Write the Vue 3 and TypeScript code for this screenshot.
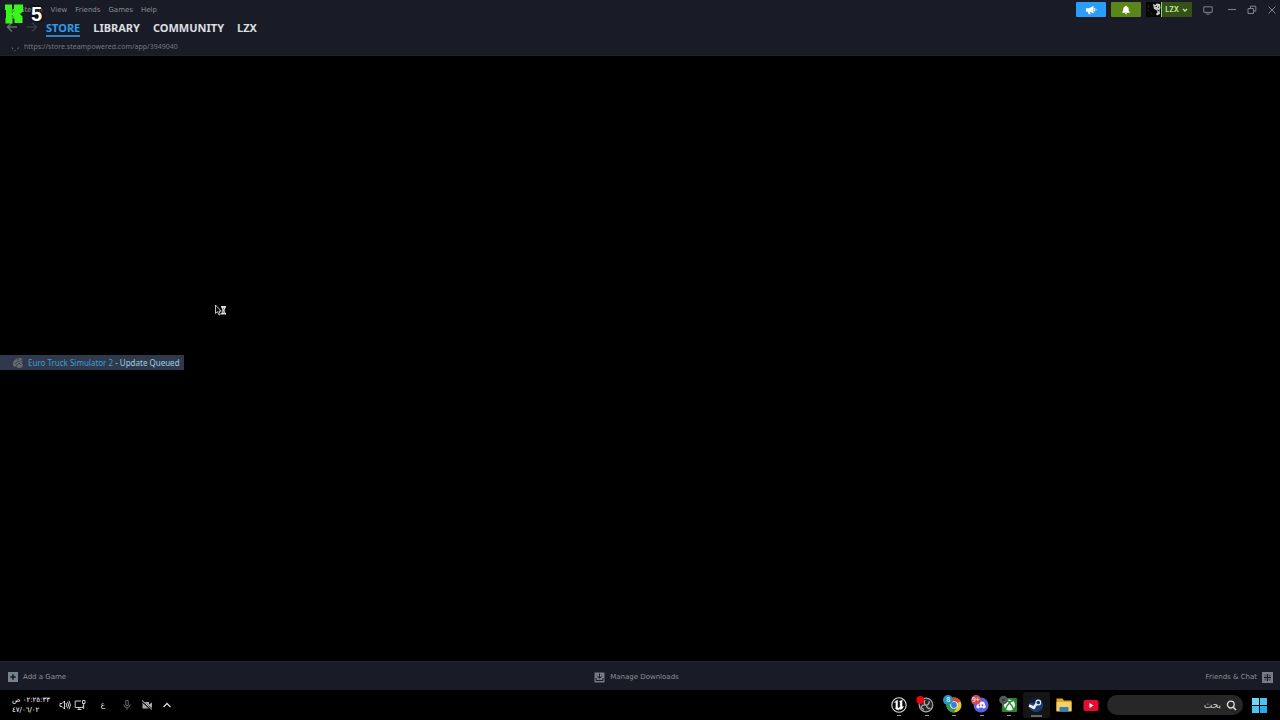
<script setup lang="ts">
interface NavTab {
  label: string
  active: boolean
}

const menus: string[] = ['Steam', 'View', 'Friends', 'Games', 'Help']
const tabs: NavTab[] = [
  { label: 'STORE', active: true },
  { label: 'LIBRARY', active: false },
  { label: 'COMMUNITY', active: false },
  { label: 'LZX', active: false },
]
</script>

<template>
  <div class="desktop">
    <header class="top">
      <div class="left">
        <nav class="menus" aria-label="Menu">
          <button v-for="m in menus" :key="m" type="button">{{ m }}</button>
        </nav>
        <nav class="tabs" aria-label="Main">
          <button class="arrow" type="button" aria-label="Back">
            <svg width="12" height="12" viewBox="0 0 12 12"><path d="M6 1.5 1.5 6 6 10.5M1.8 6H11" /></svg>
          </button>
          <button class="arrow dim" type="button" aria-label="Forward">
            <svg width="12" height="12" viewBox="0 0 12 12"><path d="M6 1.5 10.5 6 6 10.5M1 6h9.2" /></svg>
          </button>
          <a v-for="t in tabs" :key="t.label" href="#" :class="{ active: t.active }">{{ t.label }}</a>
        </nav>
        <div class="address">
          <svg width="10" height="10" viewBox="0 0 10 10">
            <path d="M2 5.500 3 7M4.500 8.500h1M7.500 7l1-1.500" fill="none" stroke="#6b7078" />
          </svg>
          <span>https://store.steampowered.com/app/3949040</span>
        </div>
      </div>
      <div class="controls">
        <button class="news" type="button" aria-label="News">
          <svg width="12" height="10" viewBox="0 0 12 10">
            <path d="M1 3.200h3L8.500 1v7.500L5 6.800l.6 2.400H3.500L3 6.700H1z" fill="#fff" />
            <path d="M9.700 3v3.500M10.800 4.700h.8" stroke="#fff" fill="none" />
          </svg>
        </button>
        <button class="alerts" type="button" aria-label="Notifications">
          <svg width="10" height="10" viewBox="0 0 10 10">
            <path d="M5 .8c.6 0 .9.4.9.8 1.400.4 1.800 1.500 1.800 2.700 0 1.400.3 2 1.100 2.700v.7H1.200V7c.8-.7 1.100-1.300 1.100-2.700 0-1.200.4-2.300 1.800-2.700 0-.4.3-.8.9-.8zM3.900 8.200h2.200c0 1.300-2.200 1.300-2.200 0z" fill="#fff" />
          </svg>
        </button>
        <button class="account" type="button">
          <svg class="avatar" width="16" height="15" viewBox="0 0 16 15">
            <path d="M0 0h15v15H0z" fill="#050706" />
            <path d="M7 2l2.500 1 1-1.500 3.500.5.5 4-1 2 .5 4-3 1.500-1-1.500L11.500 10l-1-2-2.500-1z" fill="#c9cecb" />
            <path d="M9.500 4.500h1.500M12 5l1 .5M11.500 8l1.500 1" stroke="#111" />
            <path d="M1 8l2 1M2 3l1 3M4 10l2 2" stroke="#252a29" />
            <path d="M15 0h1v15h-1z" fill="#a3cf5c" />
          </svg>
          <span>LZX</span>
          <svg width="6" height="6" viewBox="0 0 6 6"><path d="M1 2l2 2 2-2" fill="none" stroke="#bde58b" stroke-width="1.300" /></svg>
        </button>
        <button class="win bigpic" type="button" aria-label="Big Picture">
          <svg width="10" height="10" viewBox="0 0 10 10"><path d="M.8 1.800h8.400v5.500H.8zM3 9h4" /></svg>
        </button>
        <button class="win" type="button" aria-label="Minimize">
          <svg width="10" height="10" viewBox="0 0 10 10"><path d="M1 4.500h8" /></svg>
        </button>
        <button class="win" type="button" aria-label="Restore">
          <svg width="10" height="10" viewBox="0 0 10 10"><path d="M1 3.500h5.500V8.500H1zM3.500 3.200V1.200h5.300v5H6.800" /></svg>
        </button>
        <button class="win" type="button" aria-label="Close">
          <svg width="10" height="10" viewBox="0 0 10 10"><path d="M1.500 1.500l7 7M8.500 1.500l-7 7" /></svg>
        </button>
      </div>
      <div class="overlay">
        <svg width="18" height="20" viewBox="0 0 18 20">
          <path d="M0 .5h7v5l2-.5V.5h9v7l-3 2.500 2.500 2.500V19H9.500v-4L7.500 14v5.500H.5V14H1V6H0z" fill="#3cf51f" />
          <path d="M7.200 6v3l2-2.500M7.200 13.500v-2.300l2 2.300" fill="none" stroke="#1a7b18" stroke-width=".6" />
        </svg>
        <span>5</span>
      </div>
    </header>

    <main class="page">
      <div class="status">
        <svg width="12" height="12" viewBox="0 0 12 12">
          <path d="M1 8C.5 4 4 1 8 1l3 1-3 1.500 3 .5-2 2 2 1-1 3.500-4 .5-2-2-2 1z" fill="#68696d" />
          <path d="M3 7l3-3 2 1M4 9l3-3 2 2M5 3l2-1" fill="none" stroke="#30343c" stroke-width=".7" />
        </svg>
        <span><span class="game">Euro Truck Simulator 2</span> - Update Queued</span>
      </div>
      <svg class="pointer" width="13" height="12" viewBox="0 0 13 12">
        <path d="M1.500 1v8.500l2-1.800L5 11l1.300-.6L5 7.200h2.300z" fill="#111" stroke="#eee" stroke-width=".8" />
        <path d="M7 2h5v1.500H7zM7 9h5v1.500H7zM7.500 3.500h4l-1 2.700 1 2.800h-4l1-2.800z" fill="#ddd" />
        <path d="M9 4.700h1M8.500 8h2" fill="none" stroke="#222" stroke-width=".8" />
      </svg>
    </main>

    <footer class="bottom">
      <button type="button">
        <svg width="10" height="10" viewBox="0 0 10 10"><path d="M0 0h10v10H0z" fill="#77808d" /><path d="M5 2.200v5.600M2.200 5h5.600" stroke="#1a1d27" stroke-width="1.600" /></svg>
        <span>Add a Game</span>
      </button>
      <button type="button">
        <svg width="11" height="11" viewBox="0 0 11 11"><path d="M.5.5h10v10H.5z" fill="#777b85" /><path d="M5.500 1.500v4.500M3.200 4l2.300 2.300L7.800 4M2 6v2.500h7V6" fill="none" stroke="#1a1d27" /></svg>
        <span>Manage Downloads</span>
      </button>
      <button type="button">
        <span>Friends &amp; Chat</span>
        <svg width="11" height="11" viewBox="0 0 11 11"><path d="M0 0h11v11H0z" fill="#777d86" /><path d="M5.500 2v7M2 5.500h7" stroke="#1a1d27" /><path d="M2.500 2.500h2v2h-2zM6.500 2.500h2v2h-2zM2.500 6.500h2v2h-2zM6.500 6.500h2v2h-2z" fill="#444955" /></svg>
      </button>
    </footer>

    <div class="taskbar">
      <div class="tray">
        <div class="clock" lang="ar">
          <span>٠٢:٢٥:٣٣ ص</span>
          <bdo dir="ltr">٤٧/٠٦/٠٢</bdo>
        </div>
        <button class="vol" type="button" aria-label="Volume">
          <svg width="12" height="12" viewBox="0 0 12 12"><path d="M1 4.500h2L5.500 2v8L3 7.500H1zM7 4q1.500 2 0 4M8.500 2.800q2.300 3.200 0 6.400M10 1.800q3 4.200 0 8.400" /></svg>
        </button>
        <button class="net" type="button" aria-label="Network">
          <svg width="12" height="12" viewBox="0 0 12 12"><path d="M7 2H1.200v6.500h8V6M3.500 10.500h4M5 8.500v2M8.500 1.500h2.500v3H8.500zM9.700 4.500V10" /></svg>
        </button>
        <button class="lang" type="button" lang="ar">ع</button>
        <button class="mic" type="button" aria-label="Microphone">
          <svg width="10" height="12" viewBox="0 0 10 12"><path d="M3.800 1.500h2.400v5H3.800zM1.800 5.500q0 3 3.200 3t3.200-3M5 8.500V11" /></svg>
        </button>
        <button class="cam" type="button" aria-label="Camera off">
          <svg width="12" height="12" viewBox="0 0 12 12"><path class="solid" d="M1.500 3h6.500v6.500H1.500zM8 5.500l3-2v5.500l-3-2z" /><path class="gap" d="M1 2l10 9" /><path d="M1 1.500l10 9" /></svg>
        </button>
        <button class="more" type="button" aria-label="Hidden icons">
          <svg width="10" height="10" viewBox="0 0 10 10"><path d="M1.500 7L5 3.500 8.500 7" stroke-width="1.500" /></svg>
        </button>
      </div>

      <div class="right">
        <div class="apps">
          <button class="app run" type="button" aria-label="Unreal Engine">
            <svg width="18" height="18" viewBox="0 0 18 18"><circle cx="9" cy="9" r="7.200" fill="#050505" stroke="#ddd" stroke-width="1.100" /><path d="M4.300 6.500Q5.500 4.600 8 4.300L7.600 5.300v5.900l1.200.9 1.300-1V6L9.300 5.300q1.500-.5 3.400-1.500l-.6 1.500v5.500l1.500-.4q-1 2.600-3.200 3.200l-.7-.7-1.200 1.100q-2.700-.2-3.200-2l.6-.7V6.200z" fill="#fff" stroke="#fff" stroke-width=".4" /></svg>
          </button>
          <button class="app run" type="button" aria-label="OBS Studio">
            <svg width="22" height="18" viewBox="0 0 22 18"><circle cx="11" cy="9" r="6.800" fill="#242527" stroke="#aaa" stroke-width="1.200" /><path d="M10 4q-2 4 1.500 5.300Q15 8 14 5M11.500 9.300Q8 8 6 11q1 2 3 2.500M11.500 9.300q.5 4 4 3" fill="none" stroke="#a9a9a9" stroke-width="1.300" /><circle cx="5.300" cy="3.900" r="3.900" fill="#e80810" /></svg>
          </button>
          <button class="app run" type="button" aria-label="Google Chrome">
            <svg width="22" height="20" viewBox="0 0 22 20"><circle cx="11" cy="10" r="7.500" fill="#eac52c" /><path d="M11 10L4.500 6.200a7.500 7.500 0 0 1 13 0z" fill="#d94a35" /><path d="M11 10L4.500 6.200A7.500 7.500 0 0 0 11 17.500l3-5z" fill="#319b48" /><circle cx="11" cy="10" r="3.800" fill="#f4f4f4" /><circle cx="11" cy="10" r="2.900" fill="#347be2" /></svg>
            <span class="badge blue">8</span>
          </button>
          <button class="app run" type="button" aria-label="Discord">
            <svg width="22" height="20" viewBox="0 0 22 20"><circle cx="11" cy="10" r="7.500" fill="#5b61df" /><path d="M7.800 7q3.200-1.200 6.400 0l1.600 5.200q-1 1-2.500 1.200l-.7-1H9.400l-.7 1q-1.500-.2-2.500-1.200z" fill="#fff" /><ellipse cx="9.500" cy="10.300" rx=".9" ry="1.100" fill="#5b61df" /><ellipse cx="12.500" cy="10.300" rx=".9" ry="1.100" fill="#5b61df" /></svg>
            <span class="badge red">9+</span>
          </button>
          <button class="app run" type="button" aria-label="Xbox">
            <svg width="22" height="20" viewBox="0 0 22 20"><rect x="4" y="3" width="15" height="14" rx="1" fill="#278533" /><circle cx="11.500" cy="10" r="5.500" fill="#f4f4f4" /><path d="M7.500 14q1-3.500 4-6 3 2.500 4 6M8 5.700q2 .2 3.500 1.800Q13 5.900 15 5.700" fill="none" stroke="#278533" stroke-width="1.400" /><circle cx="5.500" cy="5" r="4.300" fill="#555a57" /><path d="M4 5h3" stroke="#222" /></svg>
          </button>
          <button class="app run selected" type="button" aria-label="Steam">
            <svg width="18" height="18" viewBox="0 0 18 18"><circle cx="9" cy="9" r="7.200" fill="#173f77" /><path d="M2 7a7.200 7.200 0 0 1 14 0z" fill="#111d35" /><path d="M2 9.500l4.500 2L10 7.500" fill="none" stroke="#eee" stroke-width="2.500" /><circle cx="11.300" cy="6.500" r="2.400" fill="#173f77" stroke="#eee" stroke-width="1.100" /><circle cx="6.800" cy="11.600" r="1.700" fill="#eee" /></svg>
          </button>
          <button class="app" type="button" aria-label="File Explorer">
            <svg width="18" height="18" viewBox="0 0 18 18"><path d="M1.500 2.500h6l1.500 2h7.500V15h-15z" fill="#e0a52b" /><path d="M1.500 6h15v9.500h-15z" fill="#f7cf62" /><path d="M4.500 11h9v4.500h-9z" fill="#2b83be" /></svg>
          </button>
          <button class="app" type="button" aria-label="YouTube">
            <svg width="18" height="18" viewBox="0 0 18 18"><rect x="1.500" y="4" width="15" height="11" rx="2" fill="#e80c35" /><path d="M7.500 7v5l4-2.500z" fill="#fff" /></svg>
          </button>
        </div>
        <label class="search" lang="ar">
          <input type="text" dir="rtl" placeholder="بحث" aria-label="بحث" />
          <svg width="11" height="11" viewBox="0 0 11 11"><circle cx="4.800" cy="4.600" r="3.400" fill="none" stroke="#ddd" stroke-width="1.300" /><path d="M7.200 7.200L10 10" stroke="#ddd" stroke-width="1.500" /></svg>
        </label>
        <button class="start" type="button" aria-label="Start">
          <svg width="15" height="15" viewBox="0 0 15 15"><path d="M0 0h7v7H0z" fill="#73d6f8" /><path d="M8 0h7v7H8zM0 8h7v7H0z" fill="#4fc1f2" /><path d="M8 8h7v7H8z" fill="#2baae9" /></svg>
        </button>
      </div>
    </div>
  </div>
</template>

<style>
html,
body {
  background: #000;
}
</style>

<style scoped>
.desktop {
  display: flex;
  flex-direction: column;
  height: 100vh;
  background: #000;
  font-family: "Noto Sans", "DejaVu Sans", sans-serif;
  font-size: 8px;
  line-height: 12px;
  overflow: hidden;
}
.desktop * {
  box-sizing: border-box;
}
button {
  display: flex;
  align-items: center;
  justify-content: center;
  margin: 0;
  padding: 0;
  border: 0;
  background: none;
  color: inherit;
  font: inherit;
  flex-shrink: 0;
}
svg {
  display: block;
  flex-shrink: 0;
}
.top {
  position: relative;
  display: flex;
  justify-content: space-between;
  align-items: flex-start;
  background: #191c26;
  border-bottom: 1px solid #20232b;
}
.menus {
  display: flex;
  gap: 8px;
  padding: 4px 0 0 20px;
  color: #8b8d93;
  font-family: "DejaVu Sans", sans-serif;
  font-size: 7px;
}
.tabs {
  display: flex;
  align-items: center;
  gap: 13px;
  height: 22px;
  padding-left: 6px;
  color: #dcdee2;
  font-size: 11px;
  font-weight: 700;
  line-height: 15px;
}
.tabs a {
  padding-top: 2px;
  color: inherit;
  text-decoration: none;
  border-bottom: 2px solid transparent;
}
.tabs a.active {
  color: #2c9df0;
  border-color: #2386c9;
}
.arrow {
  width: 12px;
  margin-right: -5px;
}
.arrow path {
  fill: none;
  stroke: #686b73;
  stroke-width: 1.5;
}
.arrow.dim path {
  stroke: #383b45;
}
.address {
  display: flex;
  align-items: center;
  gap: 4px;
  height: 17px;
  padding-left: 10px;
  color: #737780;
  font-size: 7px;
}
.controls {
  display: flex;
  align-items: center;
  gap: 4px;
  height: 17px;
  padding-top: 2px;
}
.news,
.alerts {
  width: 30px;
  height: 15px;
  margin-right: 1px;
  border-radius: 1px;
  background: #2a9df8;
}
.alerts {
  background: #5c8718;
}
.account {
  gap: 3px;
  height: 15px;
  padding-right: 4px;
  border-radius: 1px;
  background: #36501b;
  color: #bde58b;
  font-family: Inter, "Noto Sans", sans-serif;
  font-size: 7px;
  font-weight: 700;
}
.win {
  width: 16px;
  height: 15px;
}
.win.bigpic {
  margin: 0 4px;
}
.win path {
  fill: none;
  stroke: #80838a;
}
.overlay {
  position: absolute;
  top: 4px;
  left: 5px;
  display: flex;
  align-items: center;
  gap: 8px;
  color: #fff;
  font-family: "Liberation Sans", Arial, sans-serif;
  font-size: 20px;
  font-weight: 700;
  line-height: 20px;
  text-shadow: 0 0 2px #000, 0 0 3px #000;
}
.page {
  position: relative;
  flex: 1;
  min-height: 0;
}
.status {
  position: absolute;
  left: 0;
  bottom: 291px;
  display: flex;
  align-items: center;
  gap: 4px;
  height: 15px;
  padding: 0 4px 0 12px;
  background: #2f394b;
  color: #9dcde5;
  white-space: nowrap;
}
.game {
  color: #3b9fd4;
}
.pointer {
  position: absolute;
  left: 214px;
  top: 248px;
}
.bottom {
  display: grid;
  grid-template-columns: 1fr auto 1fr;
  align-items: center;
  height: 29px;
  padding: 2px 7px 0 8px;
  background: #191c26;
  border-top: 1px solid #20232b;
  color: #8c8f97;
  font-family: "DejaVu Sans", sans-serif;
  font-size: 7px;
}
.bottom button {
  gap: 5px;
  justify-self: start;
}
.bottom button:nth-child(2) {
  margin-right: 8px;
}
.bottom button:last-child {
  justify-self: end;
}
.taskbar {
  display: flex;
  align-items: center;
  justify-content: space-between;
  height: 30px;
  padding: 0 7px 0 12px;
  color: #ddd;
}
.tray,
.right,
.apps {
  display: flex;
  align-items: center;
}
.clock {
  display: flex;
  flex-direction: column;
  width: 38px;
  margin-right: 7px;
  direction: rtl;
  align-items: flex-end;
  color: #fff;
  font-family: "DejaVu Sans", sans-serif;
  font-size: 7px;
  line-height: 10px;
  white-space: nowrap;
}
.vol,
.net {
  width: 15px;
}
.tray path {
  fill: none;
  stroke: #ccc;
}
.lang {
  width: 32px;
  font-family: "DejaVu Sans", sans-serif;
}
.mic {
  width: 16px;
}
.tray .mic path {
  stroke: #666;
}
.tray .cam .solid {
  fill: #aaa;
  stroke: none;
}
.tray .cam .gap {
  stroke: #000;
  stroke-width: 2;
}
.cam {
  width: 24px;
}
.more {
  width: 16px;
}
.app {
  position: relative;
  width: 27px;
  height: 30px;
}
.app.run::after {
  content: "";
  position: absolute;
  bottom: 4px;
  left: 12px;
  width: 4px;
  height: 1px;
  background: #999;
}
.app.selected {
  height: 26px;
  border-radius: 2px;
  background: #151515;
}
.app.selected::after {
  bottom: 1px;
  left: 8px;
  width: 11px;
  height: 2px;
  background: #666;
}
.apps {
  display: grid;
  grid-template-columns: repeat(8, 1fr);
  justify-items: center;
  width: 220px;
}
.badge {
  position: absolute;
  top: 5px;
  left: 3px;
  width: 10px;
  height: 10px;
  border-radius: 5px;
  color: #fff;
  font-size: 7px;
  line-height: 10px;
  text-align: center;
}
.badge.blue {
  background: #2895bd;
}
.badge.red {
  background: #cf4a5d;
}
.search {
  display: flex;
  align-items: center;
  gap: 5px;
  width: 136px;
  height: 20px;
  margin: 0 2px;
  padding: 0 6px 0 10px;
  border-radius: 10px;
  background: #272727;
}
.search input {
  flex: 1;
  min-width: 0;
  padding: 0;
  border: 0;
  outline: 0;
  background: none;
  color: #ddd;
  font: 9px "DejaVu Sans", sans-serif;
}
.search input::placeholder {
  color: #ccc;
  opacity: 1;
}
.start {
  width: 28px;
  height: 30px;
}
</style>
